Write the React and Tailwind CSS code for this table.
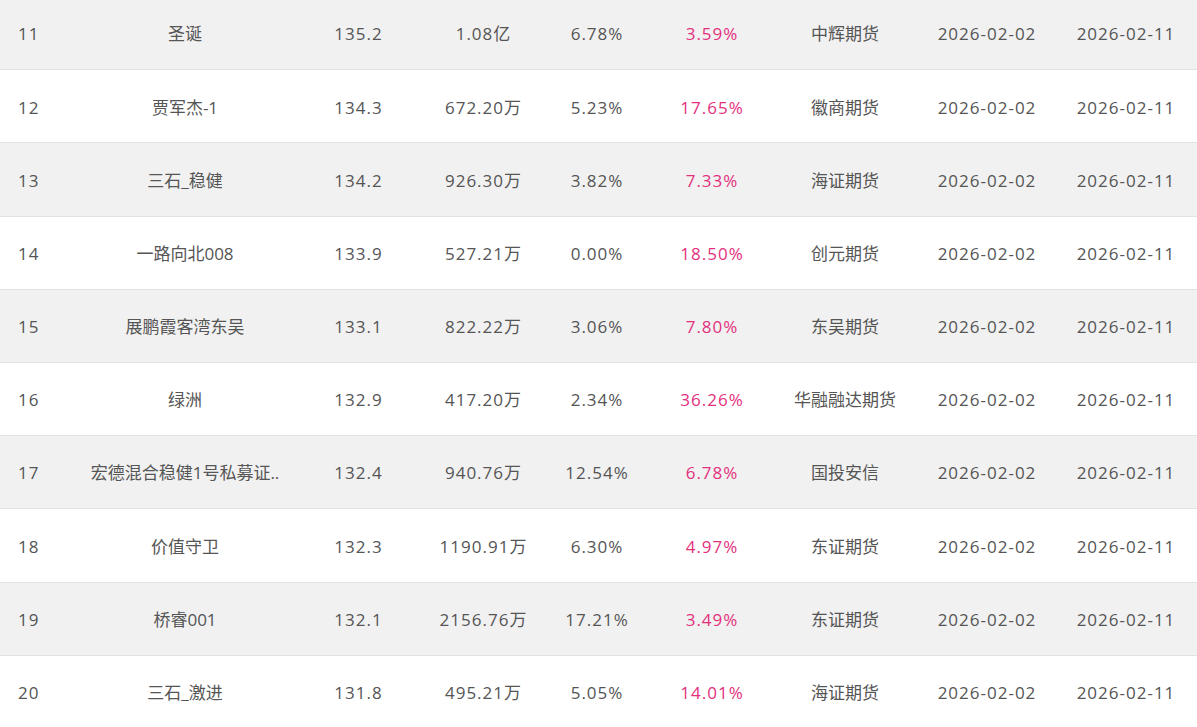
import React from 'react';

const rows = [
  ['11', '圣诞', '135.2', '1.08亿', '6.78%', '3.59%', '中辉期货', '2026-02-02', '2026-02-11'],
  ['12', '贾军杰-1', '134.3', '672.20万', '5.23%', '17.65%', '徽商期货', '2026-02-02', '2026-02-11'],
  ['13', '三石_稳健', '134.2', '926.30万', '3.82%', '7.33%', '海证期货', '2026-02-02', '2026-02-11'],
  ['14', '一路向北008', '133.9', '527.21万', '0.00%', '18.50%', '创元期货', '2026-02-02', '2026-02-11'],
  ['15', '展鹏霞客湾东吴', '133.1', '822.22万', '3.06%', '7.80%', '东吴期货', '2026-02-02', '2026-02-11'],
  ['16', '绿洲', '132.9', '417.20万', '2.34%', '36.26%', '华融融达期货', '2026-02-02', '2026-02-11'],
  ['17', '宏德混合稳健1号私募证..', '132.4', '940.76万', '12.54%', '6.78%', '国投安信', '2026-02-02', '2026-02-11'],
  ['18', '价值守卫', '132.3', '1190.91万', '6.30%', '4.97%', '东证期货', '2026-02-02', '2026-02-11'],
  ['19', '桥睿001', '132.1', '2156.76万', '17.21%', '3.49%', '东证期货', '2026-02-02', '2026-02-11'],
  ['20', '三石_激进', '131.8', '495.21万', '5.05%', '14.01%', '海证期货', '2026-02-02', '2026-02-11'],
];

const App = () => {
  return (
    <div
      className="w-[1197px] h-[727px] overflow-hidden bg-white text-[17px] text-[#555]"
      style={{ fontFamily: '"Open Sans", "Noto Sans CJK SC", sans-serif' }}
    >
      <div className="-mt-[3px]">
        {rows.map((r, i) => (
          <div
            key={r[0]}
            className={`flex items-center pt-[2px] h-[73.2px] border-b border-[#e2e2e2] ${i % 2 === 0 ? 'bg-[#f1f1f1]' : 'bg-white'}`}
          >
            <div className="w-[60px] pl-[18px] tracking-[1px]">{r[0]}</div>
            <div className="w-[250px] text-center whitespace-nowrap">{r[1]}</div>
            <div className="w-[97px] text-center tracking-[1px]">{r[2]}</div>
            <div className="w-[153px] text-center tracking-[1px]">{r[3]}</div>
            <div className="w-[74px] text-center tracking-[1px] whitespace-nowrap">{r[4]}</div>
            <div className="w-[156px] text-center tracking-[1px] text-[#e3307d]">{r[5]}</div>
            <div className="w-[110px] text-center whitespace-nowrap">{r[6]}</div>
            <div className="w-[174px] text-center tracking-[1px]">{r[7]}</div>
            <div className="w-[104px] text-center tracking-[1px] whitespace-nowrap">{r[8]}</div>
          </div>
        ))}
      </div>
    </div>
  );
};

export default App;
